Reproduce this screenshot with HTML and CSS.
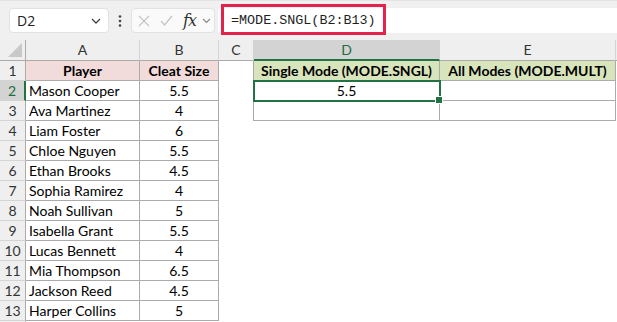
FILE: index.html
```html
<!DOCTYPE html>
<html>
<head>
  <meta charset="UTF-8">
  <title>MODE.SNGL</title>
  <link rel="stylesheet" href="styles.css">
</head>
<body>

  <div class="toolbar">
    <div class="namebox">
      <span>D2</span>
      <svg class="chev" width="10" height="6" viewBox="0 0 10 6"><path d="M1 1 L5 5 L9 1" fill="none" stroke="#444" stroke-width="1.3"/></svg>
    </div>
    <div class="dots">
      <svg width="4" height="12" viewBox="0 0 4 12"><circle cx="2" cy="1.5" r="1.3" fill="#444"/><circle cx="2" cy="6" r="1.3" fill="#444"/><circle cx="2" cy="10.5" r="1.3" fill="#444"/></svg>
    </div>
    <div class="fxbox">
      <svg width="12" height="12" viewBox="0 0 12 12"><path d="M1 1 L11 11 M11 1 L1 11" stroke="#c4c4c4" stroke-width="1.2"/></svg>
      <svg width="13" height="11" viewBox="0 0 13 11"><path d="M1 6 L4.5 10 L12 1" fill="none" stroke="#c4c4c4" stroke-width="1.2"/></svg>
      <span class="fx">fx</span>
      <svg width="9" height="6" viewBox="0 0 9 6"><path d="M1 1 L4.5 4.5 L8 1" fill="none" stroke="#8a8a8a" stroke-width="1.2"/></svg>
    </div>
    <div class="formula">
      <span class="ftext">=MODE.SNGL(B2:B13)</span>
      <div class="mark"></div>
    </div>
  </div>

  <div class="sheet">
    <!-- column headers -->
    <div class="corner"><svg width="14" height="14" viewBox="0 0 14 14"><path d="M14 0 L14 14 L0 14 Z" fill="#c8c8c8"/></svg></div>
    <div class="ch">A</div>
    <div class="ch">B</div>
    <div class="ch">C</div>
    <div class="ch sel">D</div>
    <div class="ch">E</div>
    <div class="ch end"></div>

    <!-- row 1 -->
    <div class="rh">1</div>
    <div class="t hp">Player</div>
    <div class="t hp">Cleat Size</div>
    <div class="edge"></div>
    <div class="t hg">Single Mode (MODE.SNGL)</div>
    <div class="t hg">All Modes (MODE.MULT)</div>
    <div></div>

    <!-- row 2 -->
    <div class="rh sel">2</div>
    <div class="t">Mason Cooper</div>
    <div class="t n">5.5</div>
    <div class="edge"></div>
    <div class="t n active">5.5</div>
    <div class="t"></div>
    <div></div>

    <!-- row 3 -->
    <div class="rh">3</div>
    <div class="t">Ava Martinez</div>
    <div class="t n">4</div>
    <div class="edge"></div>
    <div class="t"></div>
    <div class="t"></div>
    <div></div>

    <div class="rh">4</div>
    <div class="t">Liam Foster</div>
    <div class="t n">6</div>
    <div></div><div></div><div></div><div></div>

    <div class="rh">5</div>
    <div class="t">Chloe Nguyen</div>
    <div class="t n">5.5</div>
    <div></div><div></div><div></div><div></div>

    <div class="rh">6</div>
    <div class="t">Ethan Brooks</div>
    <div class="t n">4.5</div>
    <div></div><div></div><div></div><div></div>

    <div class="rh">7</div>
    <div class="t">Sophia Ramirez</div>
    <div class="t n">4</div>
    <div></div><div></div><div></div><div></div>

    <div class="rh">8</div>
    <div class="t">Noah Sullivan</div>
    <div class="t n">5</div>
    <div></div><div></div><div></div><div></div>

    <div class="rh">9</div>
    <div class="t">Isabella Grant</div>
    <div class="t n">5.5</div>
    <div></div><div></div><div></div><div></div>

    <div class="rh">10</div>
    <div class="t">Lucas Bennett</div>
    <div class="t n">4</div>
    <div></div><div></div><div></div><div></div>

    <div class="rh">11</div>
    <div class="t">Mia Thompson</div>
    <div class="t n">6.5</div>
    <div></div><div></div><div></div><div></div>

    <div class="rh">12</div>
    <div class="t">Jackson Reed</div>
    <div class="t n">4.5</div>
    <div></div><div></div><div></div><div></div>

    <div class="rh">13</div>
    <div class="t">Harper Collins</div>
    <div class="t n">5</div>
    <div></div><div></div><div></div><div></div>

    <div class="rh last"></div>
  </div>

</body>
</html>
```

FILE: styles.css
```css
* {
    box-sizing: border-box;
}

body {
    margin: 0;
    width: 617px;
    height: 322px;
    overflow: hidden;
    background: #fff;
    font-family: Lato, "Liberation Sans", sans-serif;
    font-size: 14px;
    color: #000;
}

/* formula bar */

.toolbar {
    height: 40px;
    background: #f0f0f0;
    border-top: 1px solid #e4e4e4;
    display: flex;
    align-items: center;
    padding-left: 9px;
}

.namebox {
    width: 100px;
    height: 25px;
    background: #fff;
    border: 1px solid #e2e2e2;
    border-radius: 4px;
    display: flex;
    align-items: center;
    justify-content: space-between;
    padding: 0 7px 0 7px;
    font-family: "Open Sans", sans-serif;
    font-size: 14px;
    color: #222;
}

.dots {
    width: 22px;
    display: flex;
    justify-content: center;
    padding-top: 1px;
}

.fxbox {
    width: 84px;
    height: 25px;
    background: #fafafa;
    border: 1px solid #e2e2e2;
    border-radius: 4px;
    display: flex;
    align-items: center;
    gap: 10px;
    padding-left: 6px;
}

.fxbox .fx {
    font-family: "DejaVu Serif", serif;
    font-style: italic;
    font-size: 16px;
    color: #333;
    margin-left: 0;
    margin-right: -4px;
    letter-spacing: -1px;
}

.formula {
    position: relative;
    flex: 1;
    height: 25px;
    margin-left: 3px;
    background: #fff;
    border-radius: 4px 0 0 4px;
    display: flex;
    align-items: center;
    padding-left: 13px;
}

.ftext {
    font-family: "Liberation Mono", monospace;
    font-size: 13.4px;
    color: #1f1f1f;
}

.mark {
    position: absolute;
    left: 3px;
    top: -4px;
    width: 165px;
    height: 31px;
    border: 3px solid #e3224e;
}

/* grid */

.sheet {
    display: grid;
    grid-template-columns: 26px 114px 79px 35px 186px 176px 1px;
    grid-template-rows: 21px repeat(13, 20px) 1px;
}

.sheet > div {
    white-space: nowrap;
    overflow: visible;
    line-height: 19px;
}

.corner {
    background: #efefef;
    border-right: 1px solid #ababab;
    border-bottom: 1px solid #ababab;
    display: flex;
    align-items: flex-end;
    justify-content: flex-end;
    padding: 0 3px 3px 0;
}

.ch {
    background: #efefef;
    border-right: 1px solid #d4d4d4;
    border-bottom: 1px solid #ababab;
    text-align: center;
    color: #333;
    line-height: 20px !important;
}

.ch.sel {
    background: #d3d3d3;
    color: #1e6b40;
    border-bottom: 2px solid #217346;
}

.ch.end {
    border-right: none;
}

.rh {
    background: #efefef;
    border-right: 1px solid #ababab;
    border-bottom: 1px solid #d4d4d4;
    text-align: center;
    color: #333;
}

.rh.sel {
    background: #d3d3d3;
    color: #1e6b40;
    border-right: 2px solid #217346;
}

.rh.last {
    border-bottom: none;
}

.t {
    border-right: 1px solid #ababab;
    border-bottom: 1px solid #ababab;
    padding-left: 3px;
}

.t.n {
    text-align: center;
    padding-left: 0;
}

.hp {
    background: #f2dcdb;
    font-weight: bold;
    text-align: center;
    padding-left: 0;
}

.hg {
    background: #d8e4bc;
    font-weight: bold;
    text-align: center;
    padding-left: 0;
}

.edge {
    border-right: 1px solid #ababab;
}

.active {
    position: relative;
    outline: 2px solid #217346;
    outline-offset: -1px;
}

.active::after {
    content: "";
    position: absolute;
    right: -4px;
    bottom: -4px;
    width: 6px;
    height: 6px;
    background: #217346;
    border: 1px solid #fff;
}
```
